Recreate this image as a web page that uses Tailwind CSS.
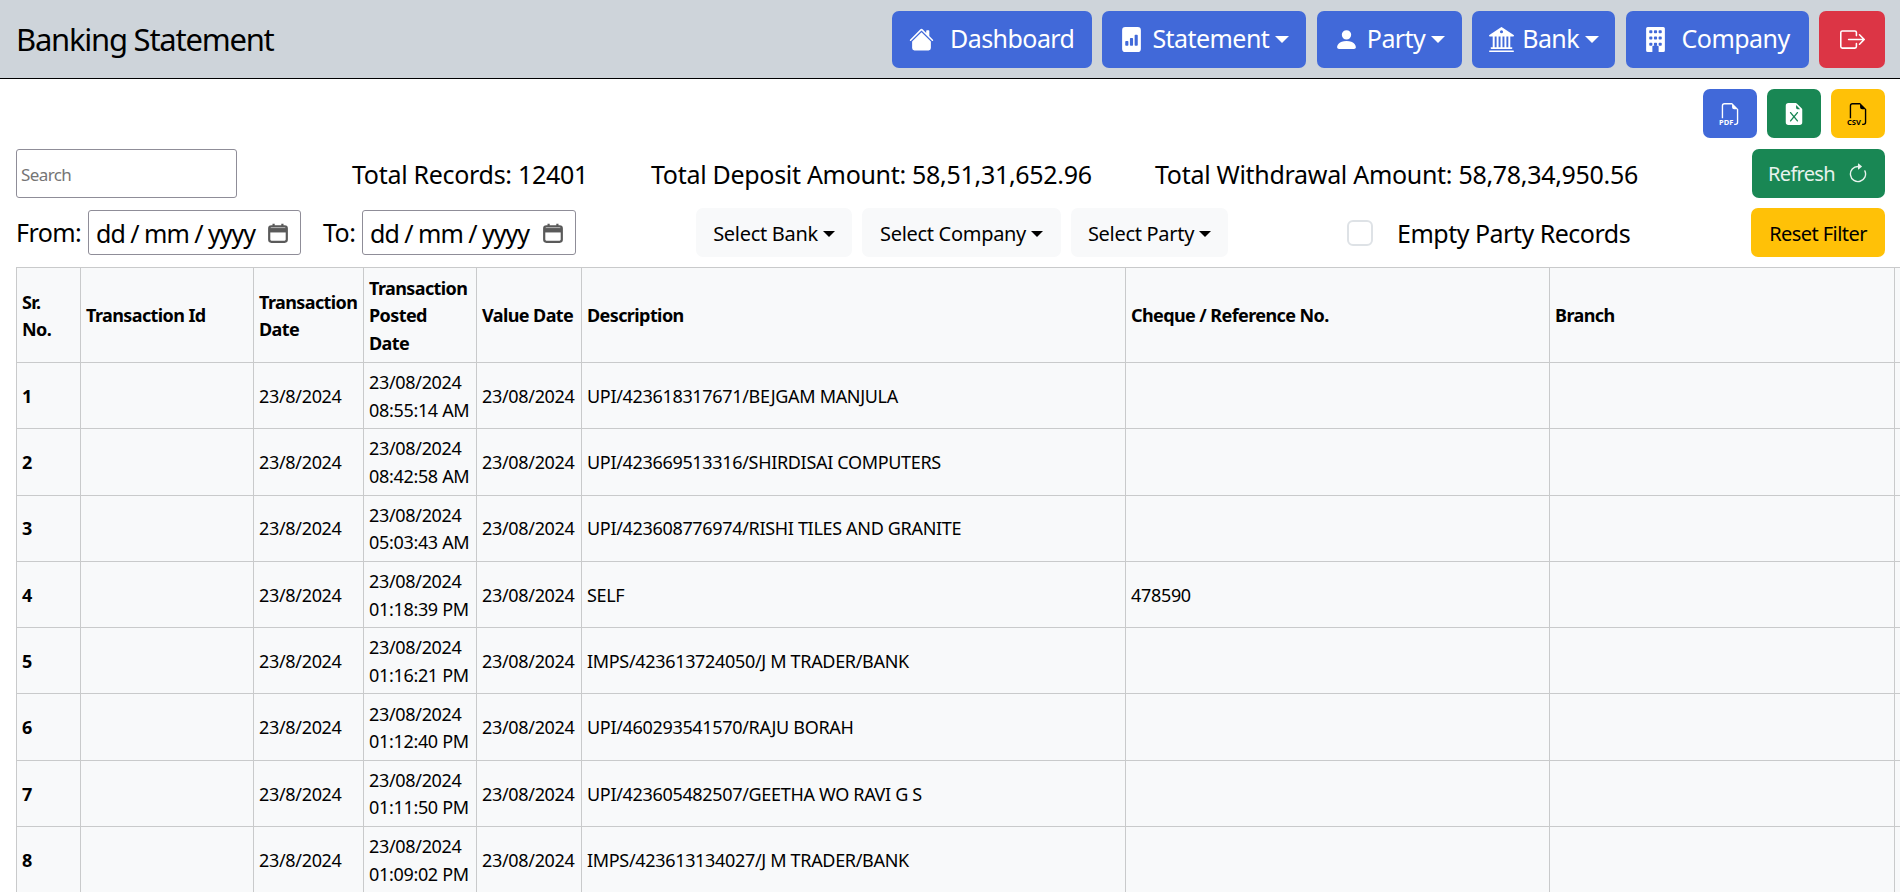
<!DOCTYPE html>
<html lang="en">
<head>
  <meta charset="UTF-8">
  <meta name="viewport" content="width=device-width, initial-scale=1.0">
  <script src="https://cdn.jsdelivr.net/npm/@tailwindcss/browser@4"></script>
  <title>Banking Statement</title>
</head>
<body class="h-[892px] overflow-hidden bg-white font-['Noto_Sans',sans-serif] text-black tracking-[-0.035em]">
  <header class="flex h-[79px] items-center justify-between border-b border-black bg-[#ced4da] pl-4 pr-[15px]">
    <h1 class="text-[31px] leading-none tracking-[-0.04em]">Banking Statement</h1>
    <nav class="flex gap-[10.4px] text-[25px] text-white">
      <a class="flex h-[57px] w-[200px] items-center gap-[16px] rounded-[7px] bg-[#4169d9] pl-[17px]">
        <svg class="size-[25px]" viewBox="0 0 16 16" fill="currentColor"><path d="M8.707 1.5a1 1 0 0 0-1.414 0L.646 8.146a.5.5 0 0 0 .708.708L8 2.207l6.646 6.647a.5.5 0 0 0 .708-.708L13 5.793V2.5a.5.5 0 0 0-.5-.5h-1a.5.5 0 0 0-.5.5v1.293z"/><path d="m8 3.293 6 6V13.5a1.5 1.5 0 0 1-1.5 1.5h-9A1.5 1.5 0 0 1 2 13.5V9.293z"/></svg>
        Dashboard
      </a>
      <a class="flex h-[57px] w-[204px] items-center gap-2 rounded-[7px] bg-[#4169d9] pl-[17px]">
        <svg class="size-[25px]" viewBox="0 0 16 16" fill="currentColor"><path d="M12 0H4a2 2 0 0 0-2 2v12a2 2 0 0 0 2 2h8a2 2 0 0 0 2-2V2a2 2 0 0 0-2-2m-2 11.5v-6a.5.5 0 0 1 .5-.5h1a.5.5 0 0 1 .5.5v6a.5.5 0 0 1-.5.5h-1a.5.5 0 0 1-.5-.5m-2.500.5a.5.5 0 0 1-.5-.5v-4a.5.5 0 0 1 .5-.5h1a.5.5 0 0 1 .5.5v4a.5.5 0 0 1-.5.5zm-3 0a.5.5 0 0 1-.5-.5v-2a.5.5 0 0 1 .5-.5h1a.5.5 0 0 1 .5.5v2a.5.5 0 0 1-.5.5z"/></svg>
        <span>Statement</span>
        <span class="-ml-[2px] border-x-[7px] border-t-[7px] border-x-transparent border-t-white"></span>
      </a>
      <a class="flex h-[57px] w-[145px] items-center gap-2 rounded-[7px] bg-[#4169d9] pl-[17px]">
        <svg class="size-[25px]" viewBox="0 0 16 16" fill="currentColor"><path d="M3 14s-1 0-1-1 1-4 6-4 6 3 6 4-1 1-1 1zm5-6a3 3 0 1 0 0-6 3 3 0 0 0 0 6"/></svg>
        <span>Party</span>
        <span class="-ml-[2px] border-x-[7px] border-t-[7px] border-x-transparent border-t-white"></span>
      </a>
      <a class="flex h-[57px] w-[143px] items-center gap-2 rounded-[7px] bg-[#4169d9] pl-[17px]">
        <svg class="size-[25px]" viewBox="0 0 16 16" fill="currentColor"><path d="M8.277.084a.5.5 0 0 0-.554 0l-7.500 5A.5.5 0 0 0 .5 6h1.875v7H1.500a.5.5 0 0 0 0 1h13a.5.5 0 1 0 0-1h-.875V6H15.500a.5.5 0 0 0 .277-.916zM12.375 6v7h-1.250V6zm-2.500 0v7h-1.250V6zm-2.500 0v7h-1.250V6zm-2.500 0v7h-1.250V6zM8 4a1 1 0 1 1 0-2 1 1 0 0 1 0 2M.5 15a.5.5 0 0 0 0 1h15a.5.5 0 1 0 0-1z"/></svg>
        <span>Bank</span>
        <span class="-ml-[2px] border-x-[7px] border-t-[7px] border-x-transparent border-t-white"></span>
      </a>
      <a class="flex h-[57px] w-[183px] items-center gap-[14px] rounded-[7px] bg-[#4169d9] pl-[17px]">
        <svg class="size-[25px]" viewBox="0 0 16 16" fill="currentColor"><path d="M3 0a1 1 0 0 0-1 1v14a1 1 0 0 0 1 1h3v-3.500a.5.5 0 0 1 .5-.5h3a.5.5 0 0 1 .5.5V16h3a1 1 0 0 0 1-1V1a1 1 0 0 0-1-1zm1 2.500a.5.5 0 0 1 .5-.5h1a.5.5 0 0 1 .5.5v1a.5.5 0 0 1-.5.5h-1a.5.5 0 0 1-.5-.5zm3 0a.5.5 0 0 1 .5-.5h1a.5.5 0 0 1 .5.5v1a.5.5 0 0 1-.5.5h-1a.5.5 0 0 1-.5-.5zm3 0a.5.5 0 0 1 .5-.5h1a.5.5 0 0 1 .5.5v1a.5.5 0 0 1-.5.5h-1a.5.5 0 0 1-.5-.5zM4 6.500a.5.5 0 0 1 .5-.5h1a.5.5 0 0 1 .5.5v1a.5.5 0 0 1-.5.5h-1a.5.5 0 0 1-.5-.5zm3 0a.5.5 0 0 1 .5-.5h1a.5.5 0 0 1 .5.5v1a.5.5 0 0 1-.5.5h-1a.5.5 0 0 1-.5-.5zm3 0a.5.5 0 0 1 .5-.5h1a.5.5 0 0 1 .5.5v1a.5.5 0 0 1-.5.5h-1a.5.5 0 0 1-.5-.5zM4 10.500a.5.5 0 0 1 .5-.5h1a.5.5 0 0 1 .5.5v1a.5.5 0 0 1-.5.5h-1a.5.5 0 0 1-.5-.5zm3 0a.5.5 0 0 1 .5-.5h1a.5.5 0 0 1 .5.5v1a.5.5 0 0 1-.5.5h-1a.5.5 0 0 1-.5-.5zm3 0a.5.5 0 0 1 .5-.5h1a.5.5 0 0 1 .5.5v1a.5.5 0 0 1-.5.5h-1a.5.5 0 0 1-.5-.5z"/></svg>
        Company
      </a>
      <a class="flex h-[57px] w-[66px] items-center justify-center rounded-[7px] bg-[#dc3545]">
        <svg class="size-[25px]" viewBox="0 0 16 16" fill="currentColor"><path d="M10 12.500a.5.5 0 0 1-.5.5h-8a.5.5 0 0 1-.5-.5v-9a.5.5 0 0 1 .5-.5h8a.5.5 0 0 1 .5.5v2a.5.5 0 0 0 1 0v-2A1.500 1.500 0 0 0 9.500 2h-8A1.500 1.500 0 0 0 0 3.500v9A1.500 1.500 0 0 0 1.500 14h8a1.500 1.500 0 0 0 1.500-1.500v-2a.5.5 0 0 0-1 0z"/><path d="M15.854 8.354a.5.5 0 0 0 0-.708l-3-3a.5.5 0 0 0-.708.708L14.293 7.500H5.500a.5.5 0 0 0 0 1h8.793l-2.147 2.146a.5.5 0 0 0 .708.708z"/></svg>
      </a>
    </nav>
  </header>

  <main class="pl-4 pr-[15px] pt-[10px]">
    <div class="flex justify-end gap-[10px]">
      <button class="flex h-[49px] w-[54px] items-center justify-center rounded-[7px] bg-[#4169d9] text-white">
        <svg class="size-[22px] overflow-visible" viewBox="0 0 16 16" fill="currentColor"><path d="M14 4.500V14a2 2 0 0 1-2 2h-1v-1h1a1 1 0 0 0 1-1V4.500h-2A1.500 1.500 0 0 1 9.500 3V1H4a1 1 0 0 0-1 1v9H2V2a2 2 0 0 1 2-2h5.500z"/><text x="0" y="15.800" font-size="5.500" font-weight="700" letter-spacing="0">PDF</text></svg>
      </button>
      <button class="flex h-[49px] w-[54px] items-center justify-center rounded-[7px] bg-[#198754] text-white">
        <svg class="size-[22px]" viewBox="0 0 16 16" fill="currentColor"><path d="M9.293 0H4a2 2 0 0 0-2 2v12a2 2 0 0 0 2 2h8a2 2 0 0 0 2-2V4.707A1 1 0 0 0 13.707 4L10 .293A1 1 0 0 0 9.293 0M9.500 3.500v-2l3 3h-2a1 1 0 0 1-1-1M5.884 6.680 8 9.219l2.116-2.540a.5.5 0 1 1 .768.641L8.651 10l2.233 2.680a.5.5 0 0 1-.768.640L8 10.781l-2.116 2.540a.5.5 0 0 1-.768-.641L7.349 10 5.116 7.320a.5.5 0 1 1 .768-.640"/></svg>
      </button>
      <button class="flex h-[49px] w-[54px] items-center justify-center rounded-[7px] bg-[#ffc107] text-black">
        <svg class="size-[22px] overflow-visible" viewBox="0 0 16 16" fill="currentColor"><path d="M14 4.500V14a2 2 0 0 1-2 2h-1v-1h1a1 1 0 0 0 1-1V4.500h-2A1.500 1.500 0 0 1 9.500 3V1H4a1 1 0 0 0-1 1v9H2V2a2 2 0 0 1 2-2h5.500z"/><text x="0" y="15.800" font-size="5.500" font-weight="700" letter-spacing="0">CSV</text></svg>
      </button>
    </div>

    <div class="mt-[11px] flex h-[49px] items-center text-[25px] tracking-[-0.012em]">
      <input placeholder="Search" class="h-[49px] w-[221px] rounded-[3px] border border-[#8f8d98] px-[4px] pt-[2px] text-[17px] tracking-[-0.035em] placeholder:text-[#757575]">
      <span class="ml-[115px] w-[299px] pt-[2px]">Total Records: 12401</span>
      <span class="w-[504px] pt-[2px]">Total Deposit Amount: 58,51,31,652.96</span>
      <span class="pt-[2px]">Total Withdrawal Amount: 58,78,34,950.56</span>
      <button class="ml-auto flex h-[49px] w-[133px] items-center justify-center gap-[12px] rounded-[7px] bg-[#198754] text-[20px] tracking-[-0.035em] text-white/90">
        Refresh
        <svg class="size-[22px]" viewBox="0 0 16 16" fill="currentColor"><path d="M8 3a5 5 0 1 0 4.546 2.914.5.5 0 0 1 .908-.417A6 6 0 1 1 8 2z"/><path d="M8 4.466V.534a.25.25 0 0 1 .41-.192l2.360 1.966c.12.1.12.284 0 .384L8.410 4.658A.25.25 0 0 1 8 4.466"/></svg>
      </button>
    </div>

    <div class="mt-[10px] flex h-[49px] items-center text-[25px]">
      <label class="w-[72px]">From:</label>
      <div class="flex h-[45px] w-[213px] items-center justify-between rounded-[3px] border border-[#8f8d98] pl-[7px] pr-[11px]">
        <span class="pt-[3px] tracking-[-0.04em]">dd / mm / yyyy</span>
        <svg class="size-[22px] text-[#5a5a5a]" viewBox="0 0 20 20" fill="none" stroke="currentColor" stroke-width="2"><rect x="2" y="4" width="16" height="14" rx="2"/><path d="M2 7.500h16" stroke-width="4"/><path d="M6 1.500v3M14 1.500v3"/></svg>
      </div>
      <label class="ml-[22px] w-[39px]">To:</label>
      <div class="flex h-[45px] w-[214px] items-center justify-between rounded-[3px] border border-[#8f8d98] pl-[7px] pr-[11px]">
        <span class="pt-[3px] tracking-[-0.04em]">dd / mm / yyyy</span>
        <svg class="size-[22px] text-[#5a5a5a]" viewBox="0 0 20 20" fill="none" stroke="currentColor" stroke-width="2"><rect x="2" y="4" width="16" height="14" rx="2"/><path d="M2 7.500h16" stroke-width="4"/><path d="M6 1.500v3M14 1.500v3"/></svg>
      </div>
      <div class="ml-[120px] flex gap-[10px] text-[20px] tracking-[-0.015em]">
        <button class="flex h-[49px] w-[156px] items-center justify-center gap-[5px] rounded-[7px] bg-[#f8f9fa] pt-[2px]">Select Bank <span class="border-x-[6px] border-t-[6px] border-x-transparent border-t-black"></span></button>
        <button class="flex h-[49px] w-[199px] items-center justify-center gap-[5px] rounded-[7px] bg-[#f8f9fa] pt-[2px]">Select Company <span class="border-x-[6px] border-t-[6px] border-x-transparent border-t-black"></span></button>
        <button class="flex h-[49px] w-[157px] items-center justify-center gap-[5px] rounded-[7px] bg-[#f8f9fa] pt-[2px]">Select Party <span class="border-x-[6px] border-t-[6px] border-x-transparent border-t-black"></span></button>
      </div>
      <span class="ml-[119px] size-[26px] rounded-[6px] border-2 border-[#dee2e6] bg-white"></span>
      <span class="ml-[24px] pt-[2px] tracking-[-0.02em]">Empty Party Records</span>
      <button class="ml-auto h-[49px] w-[134px] rounded-[7px] bg-[#ffc107] pt-[2px] text-[20px]">Reset Filter</button>
    </div>
  </main>

  <div class="mt-[10px] overflow-hidden pl-4">
    <table id="statement" class="w-[2200px] table-fixed border-collapse bg-[#f8f9fa] text-[18px] leading-[27.500px] tracking-[-0.018em]">
      <colgroup>
        <col class="w-[64px]"><col class="w-[173px]"><col class="w-[110px]"><col class="w-[113px]"><col class="w-[105px]"><col class="w-[544px]"><col class="w-[424px]"><col class="w-[345px]"><col>
      </colgroup>
      <thead>
        <tr class="h-[95px] font-bold tracking-[-0.033em]">
          <th class="border border-[#c9cacb] px-[5px] pt-[6px] pb-[4px] text-left">Sr.<br>No.</th>
          <th class="border border-[#c9cacb] px-[5px] pt-[6px] pb-[4px] text-left">Transaction Id</th>
          <th class="border border-[#c9cacb] px-[5px] pt-[6px] pb-[4px] text-left">Transaction Date</th>
          <th class="border border-[#c9cacb] px-[5px] pt-[6px] pb-[4px] text-left">Transaction Posted Date</th>
          <th class="border border-[#c9cacb] px-[5px] pt-[6px] pb-[4px] text-left">Value Date</th>
          <th class="border border-[#c9cacb] px-[5px] pt-[6px] pb-[4px] text-left">Description</th>
          <th class="border border-[#c9cacb] px-[5px] pt-[6px] pb-[4px] text-left">Cheque / Reference No.</th>
          <th class="border border-[#c9cacb] px-[5px] pt-[6px] pb-[4px] text-left">Branch</th>
          <th class="border border-[#c9cacb] px-[5px] pt-[6px] pb-[4px] text-left"></th>
        </tr>
      </thead>
      <tbody></tbody>
    </table>
  </div>

  <script>
    const rows = [
      ['1', '23/08/2024', '08:55:14 AM', 'UPI/423618317671/BEJGAM MANJULA', ''],
      ['2', '23/08/2024', '08:42:58 AM', 'UPI/423669513316/SHIRDISAI COMPUTERS', ''],
      ['3', '23/08/2024', '05:03:43 AM', 'UPI/423608776974/RISHI TILES AND GRANITE', ''],
      ['4', '23/08/2024', '01:18:39 PM', 'SELF', '478590'],
      ['5', '23/08/2024', '01:16:21 PM', 'IMPS/423613724050/J M TRADER/BANK', ''],
      ['6', '23/08/2024', '01:12:40 PM', 'UPI/460293541570/RAJU BORAH', ''],
      ['7', '23/08/2024', '01:11:50 PM', 'UPI/423605482507/GEETHA WO RAVI G S', ''],
      ['8', '23/08/2024', '01:09:02 PM', 'IMPS/423613134027/J M TRADER/BANK', '']
    ]

    const td = 'border border-[#c9cacb] px-[5px] pt-[6px] pb-[4px]'
    document.querySelector('#statement tbody').innerHTML = rows.map(([no, date, time, desc, ref]) => `
      <tr class="h-[66.3px]">
        <td class="${td} font-bold">${no}</td>
        <td class="${td}"></td>
        <td class="${td}">23/8/2024</td>
        <td class="${td}">${date}<br>${time}</td>
        <td class="${td}">${date}</td>
        <td class="${td}">${desc}</td>
        <td class="${td}">${ref}</td>
        <td class="${td}"></td>
        <td class="${td}"></td>
      </tr>`).join('')
  </script>
</body>
</html>
